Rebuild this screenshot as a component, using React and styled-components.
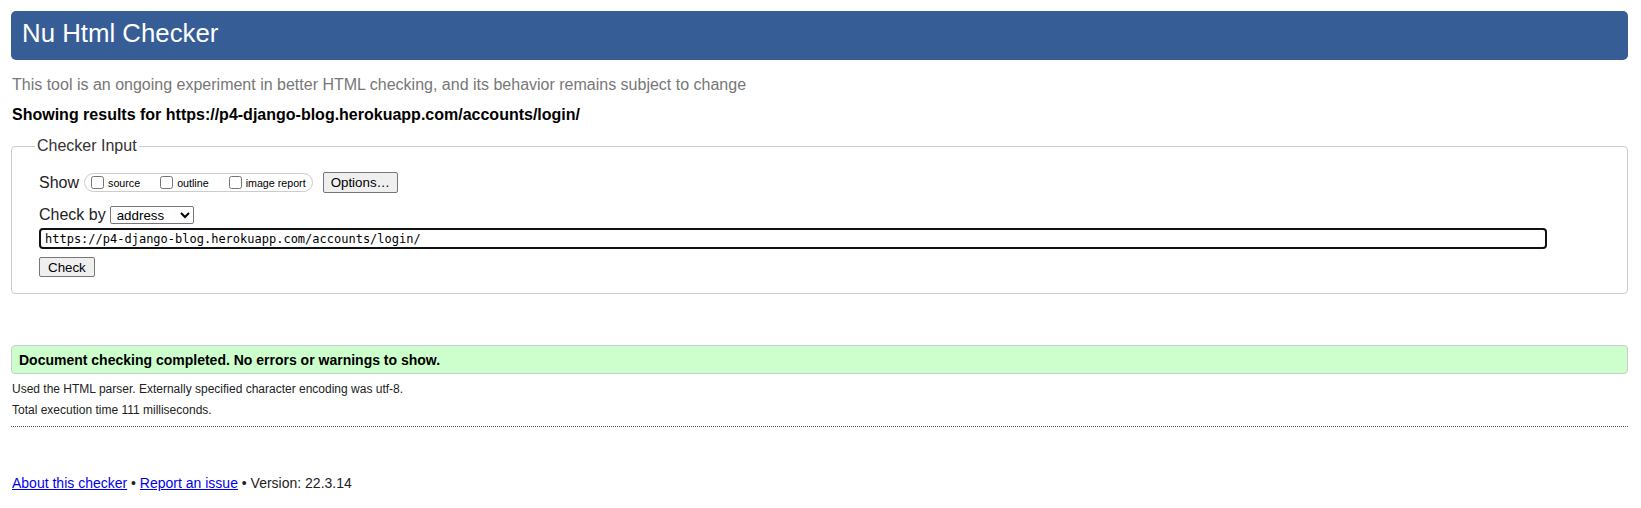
import React from "react";
import styled, { createGlobalStyle } from "styled-components";

const GlobalStyle = createGlobalStyle`
  html, body {
    margin: 0;
    padding: 0;
    background: #fff;
    font-family: "Liberation Sans", Arial, sans-serif;
    color: #000;
  }
`;

const Page = styled.div`
  padding: 11px 13px 0 11px;
`;

const Header = styled.h1`
  margin: 0;
  height: 49px;
  display: flex;
  align-items: center;
  padding: 0 10px 4px 11px;
  box-sizing: border-box;
  background: #365d96;
  border-radius: 5px;
  color: #fff;
  font-size: 25.8px;
  font-weight: normal;
`;

const Intro = styled.p`
  margin: 16px 0 0 1px;
  font-size: 16px;
  line-height: 18px;
  color: #777;
`;

const ResultsFor = styled.p`
  margin: 12px 0 0 1px;
  font-size: 16px;
  line-height: 18px;
  font-weight: bold;
`;

const Fieldset = styled.fieldset`
  margin: 13px 0 0;
  padding: 0 26px 16px 27px;
  border: 1px solid #ccc;
  border-radius: 4px;
`;

const Legend = styled.legend`
  padding: 0 2px;
  margin-left: -4px;
  font-size: 16px;
  line-height: 18px;
  color: #333;
`;

const Row = styled.div`
  display: flex;
  align-items: center;
  margin-top: ${(p) => p.$top || 0}px;
`;

const Label = styled.span`
  font-size: 16px;
  line-height: 18px;
  margin-right: ${(p) => p.$gap || 4}px;
  color: #222;
`;

const Pill = styled.div`
  display: flex;
  align-items: center;
  gap: 20px;
  height: 17px;
  padding: 0 6px 0 6px;
  border: 1px solid #ccc;
  border-radius: 10px;
  margin-right: 10px;
`;

const Option = styled.label`
  display: flex;
  align-items: center;
  font-size: 10.7px;
  color: #000;

  input {
    width: 13px;
    height: 13px;
    margin: 0 4px 0 0;
  }
`;

const Button = styled.button`
  font-family: "Liberation Sans", Arial, sans-serif;
  font-size: 13.33px;
  height: ${(p) => p.$h || 21}px;
  padding: 0 ${(p) => p.$px || 6}px;
  background: #efefef;
  border: 1px solid #767676;
  border-radius: 2px;
  color: #000;
`;

const Select = styled.select`
  font-family: "Liberation Sans", Arial, sans-serif;
  font-size: 13.33px;
  width: 84px;
  height: 18px;
  padding: 0 0 0 2px;
  border: 1px solid #767676;
  border-radius: 2px;
  background: #fff;
  color: #000;
`;

const UrlInput = styled.input`
  display: block;
  box-sizing: border-box;
  width: 1508px;
  height: 21px;
  margin-top: 4px;
  padding: 0 4px;
  border: 2px solid #111;
  border-radius: 4px;
  font-family: "DejaVu Sans Mono", monospace;
  font-size: 12px;
  color: #000;
  outline: none;
`;

const Success = styled.div`
  margin-top: 51px;
  height: 29px;
  box-sizing: border-box;
  display: flex;
  align-items: center;
  padding: 0 7px;
  background: #ccffcc;
  border: 1px solid #ccc;
  border-radius: 4px;
  font-size: 14px;
  font-weight: bold;
`;

const Detail = styled.p`
  margin: ${(p) => p.$top}px 0 0 1px;
  font-size: 12px;
  line-height: 14px;
  color: #222;
`;

const Divider = styled.hr`
  margin: 9px 0 0;
  border: 0;
  border-top: 1px dotted #555;
`;

const Footer = styled.p`
  margin: 48px 0 0 1px;
  font-size: 14px;
  line-height: 16px;
  color: #222;

  a {
    color: #0000ee;
  }
`;

const url = "https://p4-django-blog.herokuapp.com/accounts/login/";

export default function App() {
  return (
    <>
      <GlobalStyle />
      <Page>
        <Header>Nu Html Checker</Header>
        <Intro>
          This tool is an ongoing experiment in better HTML checking, and its
          behavior remains subject to change
        </Intro>
        <ResultsFor>Showing results for {url}</ResultsFor>
        <Fieldset>
          <Legend>Checker Input</Legend>
          <Row $top={17}>
            <Label $gap={5}>Show</Label>
            <Pill>
              <Option>
                <input type="checkbox" />
                source
              </Option>
              <Option>
                <input type="checkbox" />
                outline
              </Option>
              <Option>
                <input type="checkbox" />
                image report
              </Option>
            </Pill>
            <Button type="button" $px={7}>
              Options…
            </Button>
          </Row>
          <Row $top={13}>
            <Label $gap={4}>Check by</Label>
            <Select defaultValue="address">
              <option value="address">address</option>
              <option value="file">file upload</option>
              <option value="text">text input</option>
            </Select>
          </Row>
          <UrlInput type="url" defaultValue={url} />
          <Row $top={8}>
            <Button type="submit" $h={20} $px={8}>
              Check
            </Button>
          </Row>
        </Fieldset>
        <Success>Document checking completed. No errors or warnings to show.</Success>
        <Detail $top={8}>
          Used the HTML parser. Externally specified character encoding was utf-8.
        </Detail>
        <Detail $top={7}>Total execution time 111 milliseconds.</Detail>
        <Divider />
        <Footer>
          <a href="#about">About this checker</a> •{" "}
          <a href="#issue">Report an issue</a> • Version: 22.3.14
        </Footer>
      </Page>
    </>
  );
}
